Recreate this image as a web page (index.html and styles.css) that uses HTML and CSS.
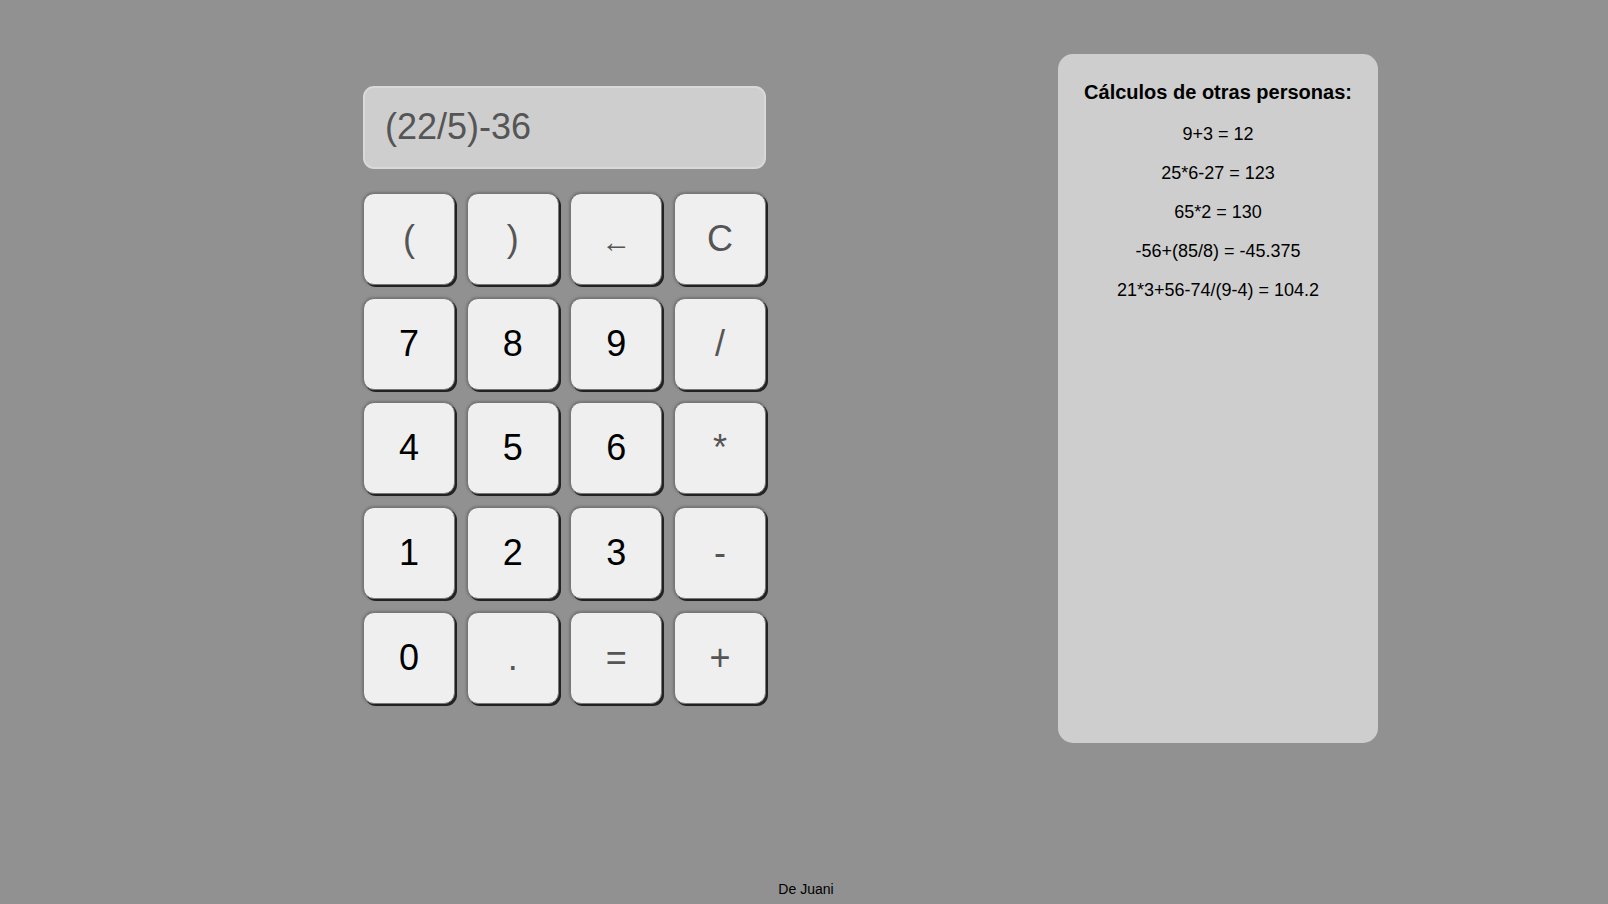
FILE: index.html
```html
<!DOCTYPE html>
<html lang="es">
<head>
<meta charset="utf-8">
<title>Calculadora</title>
<link rel="stylesheet" href="styles.css">
</head>
<body>
<main class="layout">
  <section class="calc">
    <div class="display">(22/5)-36</div>
    <div class="keys">
      <button class="key op">(</button>
      <button class="key op">)</button>
      <button class="key op arrow">←</button>
      <button class="key op">C</button>
      <button class="key">7</button>
      <button class="key">8</button>
      <button class="key">9</button>
      <button class="key op">/</button>
      <button class="key">4</button>
      <button class="key">5</button>
      <button class="key">6</button>
      <button class="key op">*</button>
      <button class="key">1</button>
      <button class="key">2</button>
      <button class="key">3</button>
      <button class="key op">-</button>
      <button class="key">0</button>
      <button class="key op">.</button>
      <button class="key op">=</button>
      <button class="key op">+</button>
    </div>
  </section>
  <aside class="history">
    <h2 class="history-title">Cálculos de otras personas:</h2>
    <p class="history-item">9+3 = 12</p>
    <p class="history-item">25*6-27 = 123</p>
    <p class="history-item">65*2 = 130</p>
    <p class="history-item">-56+(85/8) = -45.375</p>
    <p class="history-item">21*3+56-74/(9-4) = 104.2</p>
  </aside>
</main>
<footer class="footer">De Juani</footer>
</body>
</html>
```
FILE: styles.css
```css
html, body {
  margin: 0;
  padding: 0;
}
body {
  background: #919191;
  font-family: "Liberation Sans", Arial, sans-serif;
  color: #000;
  min-height: 904px;
  display: flex;
  flex-direction: column;
}
.layout {
  flex: 1;
  display: flex;
  align-items: flex-start;
  padding-left: 363px;
  gap: 292px;
}
.calc {
  width: 403px;
  padding-top: 86px;
}
.display {
  box-sizing: border-box;
  height: 83px;
  background: #cecece;
  border: 2px solid #d9d9d9;
  border-radius: 11px;
  color: #555;
  font-size: 36px;
  display: flex;
  align-items: center;
  padding: 0 20px 2px;
  margin-bottom: 24px;
}
.keys {
  display: grid;
  grid-template-columns: repeat(4, 92px);
  grid-auto-rows: 92px;
  column-gap: 11.67px;
  row-gap: 12.7px;
}
.key {
  box-sizing: border-box;
  margin: 0;
  padding: 0;
  background: #efefef;
  border: 1px solid #777;
  border-radius: 11px;
  box-shadow: 2px 2px 0 #222, 0 0 3px rgba(0,0,0,0.4);
  font-family: "Liberation Sans", Arial, sans-serif;
  font-size: 36px;
  color: #000;
  display: flex;
  align-items: center;
  justify-content: center;
}
.key.op {
  color: #555;
}
.key.arrow {
  font-size: 30px;
  padding-top: 6px;
}
.history {
  box-sizing: border-box;
  width: 320px;
  height: 689px;
  margin-top: 54px;
  background: #cecece;
  border-radius: 15px;
  padding: 27px 10px 0;
  text-align: center;
}
.history-title {
  font-size: 20px;
  font-weight: bold;
  margin: 0 0 20px;
}
.history-item {
  font-size: 18px;
  margin: 18px 0;
}
.history-title + .history-item {
  margin-top: 0;
}
.footer {
  text-align: center;
  font-size: 14px;
  padding: 0 0 7px 4px;
}
```
